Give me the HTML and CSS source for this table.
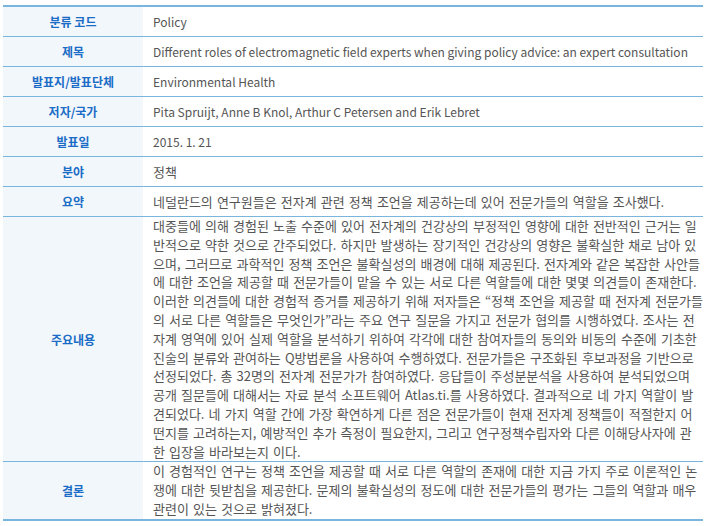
FILE: index.html
```html
<!DOCTYPE html>
<html>
  <head>
    <title>논문 정보</title>
    <meta charset="utf-8" />
    <meta name="viewport" content="width=device-width, initial-scale=1">
    <link rel="stylesheet" href="styles.css">
  </head>
  <body>
    <table class="info">
      <colgroup>
        <col class="label-col">
        <col>
      </colgroup>
      <tr>
        <th>분류 코드</th>
        <td>Policy</td>
      </tr>
      <tr>
        <th>제목</th>
        <td>Different roles of electromagnetic field experts when giving policy advice: an expert consultation</td>
      </tr>
      <tr>
        <th>발표지/발표단체</th>
        <td>Environmental Health</td>
      </tr>
      <tr>
        <th>저자/국가</th>
        <td>Pita Spruijt, Anne B Knol, Arthur C Petersen and Erik Lebret</td>
      </tr>
      <tr>
        <th>발표일</th>
        <td>2015. 1. 21</td>
      </tr>
      <tr>
        <th>분야</th>
        <td class="ko">정책</td>
      </tr>
      <tr>
        <th>요약</th>
        <td class="ko">네덜란드의 연구원들은 전자계 관련 정책 조언을 제공하는데 있어 전문가들의 역할을 조사했다.</td>
      </tr>
      <tr>
        <th>주요내용</th>
        <td class="ko para">대중들에 의해 경험된 노출 수준에 있어 전자계의 건강상의 부정적인 영향에 대한 전반적인 근거는 일<br>반적으로 약한 것으로 간주되었다. 하지만 발생하는 장기적인 건강상의 영향은 불확실한 채로 남아 있<br>으며, 그러므로 과학적인 정책 조언은 불확실성의 배경에 대해 제공된다. 전자계와 같은 복잡한 사안들<br>에 대한 조언을 제공할 때 전문가들이 맡을 수 있는 서로 다른 역할들에 대한 몇몇 의견들이 존재한다.<br>이러한 의견들에 대한 경험적 증거를 제공하기 위해 저자들은 “정책 조언을 제공할 때 전자계 전문가들<br>의 서로 다른 역할들은 무엇인가”라는 주요 연구 질문을 가지고 전문가 협의를 시행하였다. 조사는 전<br>자계 영역에 있어 실제 역할을 분석하기 위하여 각각에 대한 참여자들의 동의와 비동의 수준에 기초한<br>진술의 분류와 관여하는 Q방법론을 사용하여 수행하였다. 전문가들은 구조화된 후보과정을 기반으로<br>선정되었다. 총 32명의 전자계 전문가가 참여하였다. 응답들이 주성분분석을 사용하여 분석되었으며<br>공개 질문들에 대해서는 자료 분석 소프트웨어 Atlas.ti.를 사용하였다. 결과적으로 네 가지 역할이 발<br>견되었다. 네 가지 역할 간에 가장 확연하게 다른 점은 전문가들이 현재 전자계 정책들이 적절한지 어<br>떤지를 고려하는지, 예방적인 추가 측정이 필요한지, 그리고 연구정책수립자와 다른 이해당사자에 관<br>한 입장을 바라보는지 이다.</td>
      </tr>
      <tr>
        <th>결론</th>
        <td class="ko para">이 경험적인 연구는 정책 조언을 제공할 때 서로 다른 역할의 존재에 대한 지금 가지 주로 이론적인 논<br>쟁에 대한 뒷받침을 제공한다. 문제의 불확실성의 정도에 대한 전문가들의 평가는 그들의 역할과 매우<br>관련이 있는 것으로 밝혀졌다.</td>
      </tr>
    </table>
  </body>
</html>
```

FILE: styles.css
```css
body{
    margin: 5px 3px;
    background-color: #fff;
}

.info{
    width: 700px;
    table-layout: fixed;
    border-collapse: separate;
    border-spacing: 0;
    border-top: 2px solid #7ab5de;
    border-bottom: 2px solid #7ab5de;
    font-family: "Noto Sans CJK KR", sans-serif;
    font-size: 12px;
}

.label-col{
    width: 140px;
}

.info th{
    padding: 5px 0;
    line-height: 19px;
    background-color: #f2f7fb;
    color: #1a6cc6;
    font-weight: bold;
    text-align: center;
    border-bottom: 1px solid #7ab5de;
}

.info td{
    padding: 5px 10px;
    line-height: 19px;
    color: #555;
    white-space: nowrap;
    border-bottom: 1px solid #7ab5de;
}

.info td.ko{
    font-size: 13px;
    word-spacing: 1.2px;
}

.info td.para{
    padding: 0 10px;
    line-height: 18.8px;
}

.info tr:last-child th,
.info tr:last-child td{
    border-bottom: none;
}
```
